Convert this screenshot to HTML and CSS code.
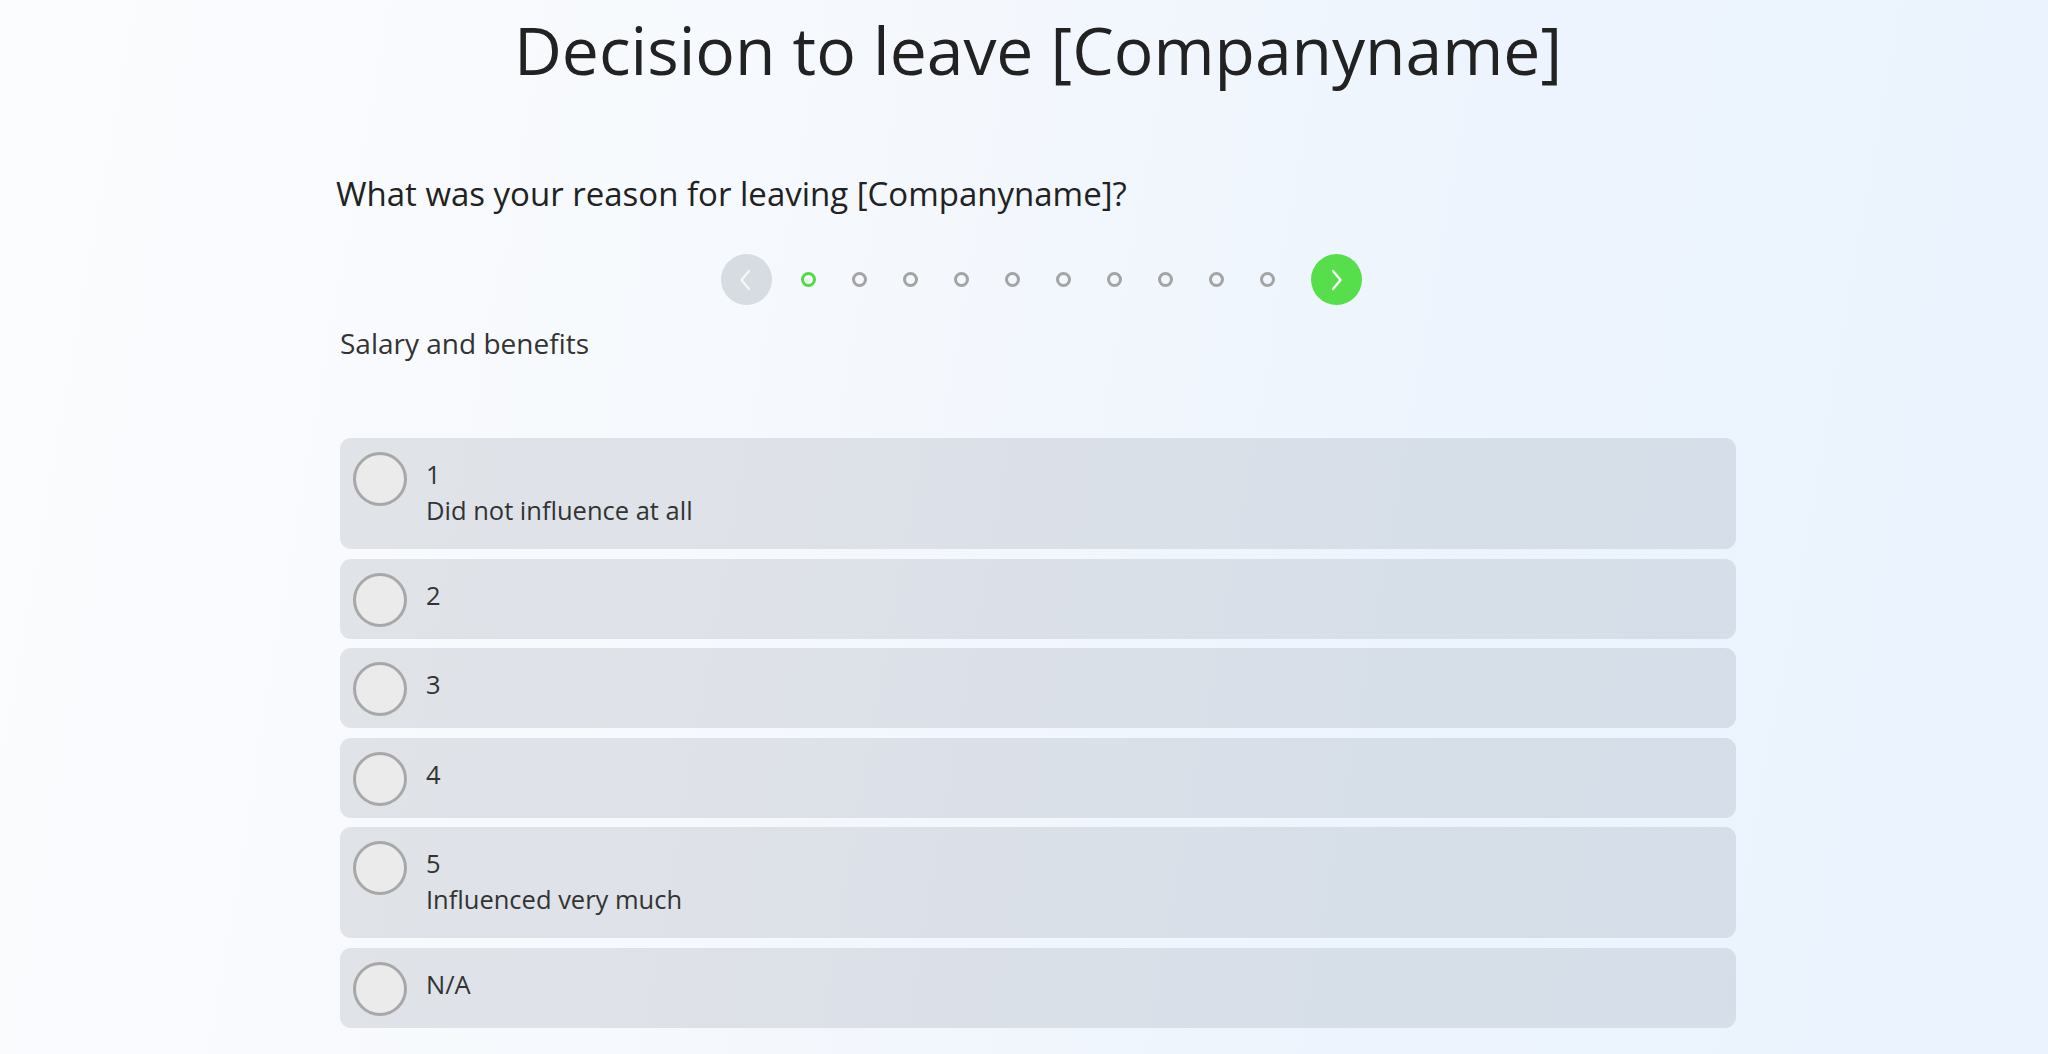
FILE: index.html
```html
<!DOCTYPE html>
<html lang="en">
<head>
<meta charset="utf-8">
<title>Decision to leave</title>
<link rel="stylesheet" href="styles.css">
</head>
<body>
<main class="page">
  <h1 class="title">Decision to leave [Companyname]</h1>
  <section class="survey">
    <h2 class="question">What was your reason for leaving [Companyname]?</h2>
    <nav class="pager">
      <button class="nav-btn prev" aria-label="Previous">
        <svg viewBox="0 0 14 22" width="14" height="22"><path d="M11 2 L3.5 11 L11 20" fill="none" stroke="#f5f7f9" stroke-width="2.3" stroke-linecap="round" stroke-linejoin="round"/></svg>
      </button>
      <span class="dot active"></span>
      <span class="dot"></span>
      <span class="dot"></span>
      <span class="dot"></span>
      <span class="dot"></span>
      <span class="dot"></span>
      <span class="dot"></span>
      <span class="dot"></span>
      <span class="dot"></span>
      <span class="dot"></span>
      <button class="nav-btn next" aria-label="Next">
        <svg viewBox="0 0 14 22" width="14" height="22"><path d="M3 2 L10.5 11 L3 20" fill="none" stroke="#ffffff" stroke-width="2.3" stroke-linecap="round" stroke-linejoin="round"/></svg>
      </button>
    </nav>
    <p class="topic">Salary and benefits</p>
    <ul class="options">
      <li class="option"><span class="radio"></span><span class="label"><span>1</span><span>Did not influence at all</span></span></li>
      <li class="option"><span class="radio"></span><span class="label"><span>2</span></span></li>
      <li class="option"><span class="radio"></span><span class="label"><span>3</span></span></li>
      <li class="option"><span class="radio"></span><span class="label"><span>4</span></span></li>
      <li class="option"><span class="radio"></span><span class="label"><span>5</span><span>Influenced very much</span></span></li>
      <li class="option"><span class="radio"></span><span class="label"><span>N/A</span></span></li>
    </ul>
  </section>
</main>
</body>
</html>
```

FILE: styles.css
```css
html, body {
  margin: 0;
  height: 100%;
}
body {
  font-family: "Open Sans", "Noto Sans", sans-serif;
  color: #2a2a2a;
  background: linear-gradient(100deg, #fbfcfe 0%, #f6f9fd 35%, #edf4fd 70%, #eaf3fe 100%);
  overflow: hidden;
  padding-left: 24px;
  box-sizing: border-box;
}
.page {
  width: 1400px;
  margin: 0 auto;
}
.title {
  margin: 0;
  padding: 9px 0 0 4px;
  font-size: 66px;
  font-weight: 400;
  line-height: 80px;
  text-align: center;
  color: #222;
}
.survey {
  padding-top: 83px;
}
.question {
  margin: 0;
  font-size: 33px;
  font-weight: 400;
  line-height: 44px;
  color: #222;
}
.pager {
  display: flex;
  align-items: center;
  justify-content: center;
  margin-top: 38px;
  padding-left: 11px;
}
.nav-btn {
  width: 51px;
  height: 51px;
  border-radius: 50%;
  border: none;
  padding: 0;
  display: flex;
  align-items: center;
  justify-content: center;
}
.prev { background: #d6dce1; margin-right: 10.5px; }
.prev svg { margin-left: -3px; }
.next { background: #57df4b; margin-left: 18.5px; }
.dot {
  width: 15px;
  height: 15px;
  box-sizing: border-box;
  border-radius: 50%;
  border: 3.5px solid #a4a4a4;
  margin: 0 18px;
}
.dot.active { border-color: #4fdc41; }
.topic {
  margin: 19px 0 0 4px;
  font-size: 28px;
  line-height: 38px;
  color: #333;
}
.options {
  list-style: none;
  margin: 76px 0 0 4px;
  padding: 0;
  display: flex;
  flex-direction: column;
  gap: 9.5px;
}
.option {
  display: flex;
  align-items: flex-start;
  gap: 19px;
  padding: 14px 13px 12px 13px;
  border-radius: 11px;
  background: rgba(20, 30, 50, 0.1);
}
.radio {
  flex: none;
  width: 54px;
  height: 54px;
  box-sizing: border-box;
  border-radius: 50%;
  border: 3px solid #a8a8a8;
  background: #ebebec;
}
.label {
  display: flex;
  flex-direction: column;
  padding: 4px 0 9px;
  font-size: 25.5px;
  line-height: 36px;
  color: #333;
}
```
